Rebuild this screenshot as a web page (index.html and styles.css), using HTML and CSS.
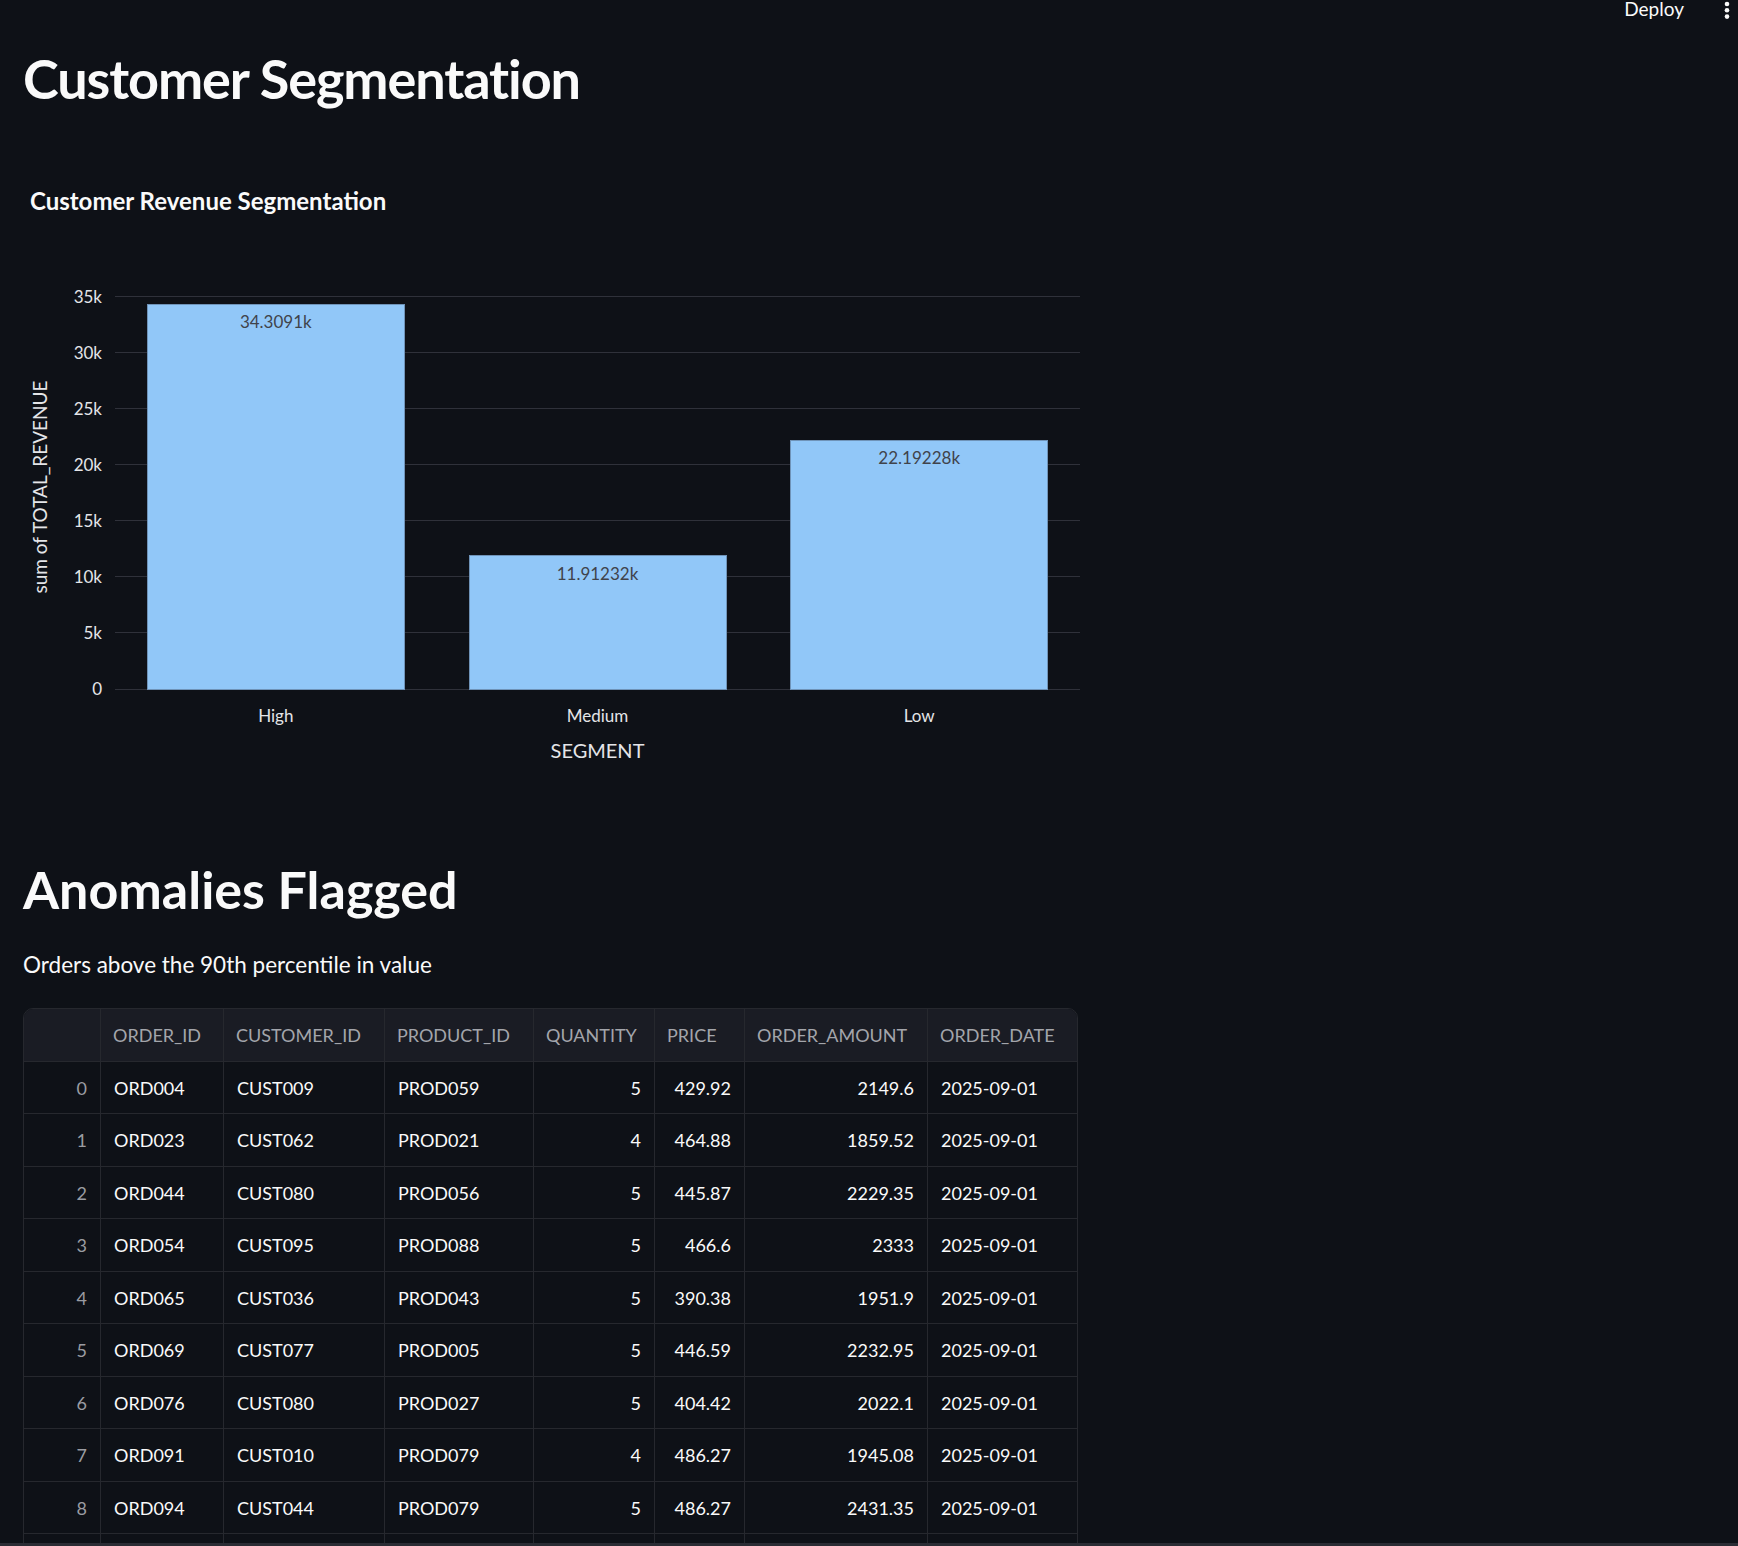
FILE: index.html
```html
<!DOCTYPE html>
<html lang="en">
<head>
<meta charset="utf-8">
<title>Customer Segmentation</title>
<link rel="stylesheet" href="styles.css">
</head>
<body>
<header class="toolbar">
  <span class="deploy">Deploy</span>
  <svg class="menu" width="6" height="20" viewBox="0 0 6 20" aria-hidden="true">
    <circle cx="3" cy="4" r="2.3"/>
    <circle cx="3" cy="10.3" r="2.3"/>
    <circle cx="3" cy="16.6" r="2.3"/>
  </svg>
</header>
<main class="main">
  <h1 class="title">Customer Segmentation</h1>
  <div class="chart-title">Customer Revenue Segmentation</div>
  <svg class="chart" width="1080" height="520" viewBox="0 0 1080 520">
    <g class="grid-lines">
      <line x1="92" x2="1057" y1="36.5" y2="36.5"/>
      <line x1="92" x2="1057" y1="92.5" y2="92.5"/>
      <line x1="92" x2="1057" y1="148.5" y2="148.5"/>
      <line x1="92" x2="1057" y1="204.5" y2="204.5"/>
      <line x1="92" x2="1057" y1="260.5" y2="260.5"/>
      <line x1="92" x2="1057" y1="316.5" y2="316.5"/>
      <line x1="92" x2="1057" y1="372.5" y2="372.5"/>
      <line x1="92" x2="1057" y1="429.5" y2="429.5"/>
    </g>
    <g class="y-labels">
      <text x="79" y="42.6">35k</text>
      <text x="79" y="98.7">30k</text>
      <text x="79" y="154.8">25k</text>
      <text x="79" y="210.9">20k</text>
      <text x="79" y="267">15k</text>
      <text x="79" y="323.1">10k</text>
      <text x="79" y="379.2">5k</text>
      <text x="79" y="435.4">0</text>
    </g>
    <g class="bars">
      <rect x="124.5" y="44" width="257" height="385.5"/>
      <rect x="446" y="295.5" width="257" height="134"/>
      <rect x="767.5" y="180" width="257" height="249.5"/>
    </g>
    <g class="bar-values">
      <text x="252.8" y="68.3">34.3091k</text>
      <text x="574.5" y="319.7">11.91232k</text>
      <text x="896.2" y="204.3">22.19228k</text>
    </g>
    <g class="x-labels">
      <text x="252.8" y="461.5">High</text>
      <text x="574.5" y="461.5">Medium</text>
      <text x="896.2" y="461.5">Low</text>
    </g>
    <text class="x-title" x="574.5" y="498">SEGMENT</text>
    <text class="y-title" transform="translate(23.5 227) rotate(-90)">sum of TOTAL_REVENUE</text>
  </svg>
  <h2 class="section">Anomalies Flagged</h2>
  <p class="caption">Orders above the 90th percentile in value</p>
  <div class="table-wrap">
    <table class="data">
      <colgroup>
        <col class="c-idx"><col class="c-order"><col class="c-cust"><col class="c-prod"><col class="c-qty"><col class="c-price"><col class="c-amt"><col class="c-date">
      </colgroup>
      <thead>
        <tr><th></th><th>ORDER_ID</th><th>CUSTOMER_ID</th><th>PRODUCT_ID</th><th>QUANTITY</th><th>PRICE</th><th>ORDER_AMOUNT</th><th>ORDER_DATE</th></tr>
      </thead>
      <tbody>
        <tr><td class="idx">0</td><td>ORD004</td><td>CUST009</td><td>PROD059</td><td class="num">5</td><td class="num">429.92</td><td class="num">2149.6</td><td>2025-09-01</td></tr>
        <tr><td class="idx">1</td><td>ORD023</td><td>CUST062</td><td>PROD021</td><td class="num">4</td><td class="num">464.88</td><td class="num">1859.52</td><td>2025-09-01</td></tr>
        <tr><td class="idx">2</td><td>ORD044</td><td>CUST080</td><td>PROD056</td><td class="num">5</td><td class="num">445.87</td><td class="num">2229.35</td><td>2025-09-01</td></tr>
        <tr><td class="idx">3</td><td>ORD054</td><td>CUST095</td><td>PROD088</td><td class="num">5</td><td class="num">466.6</td><td class="num">2333</td><td>2025-09-01</td></tr>
        <tr><td class="idx">4</td><td>ORD065</td><td>CUST036</td><td>PROD043</td><td class="num">5</td><td class="num">390.38</td><td class="num">1951.9</td><td>2025-09-01</td></tr>
        <tr><td class="idx">5</td><td>ORD069</td><td>CUST077</td><td>PROD005</td><td class="num">5</td><td class="num">446.59</td><td class="num">2232.95</td><td>2025-09-01</td></tr>
        <tr><td class="idx">6</td><td>ORD076</td><td>CUST080</td><td>PROD027</td><td class="num">5</td><td class="num">404.42</td><td class="num">2022.1</td><td>2025-09-01</td></tr>
        <tr><td class="idx">7</td><td>ORD091</td><td>CUST010</td><td>PROD079</td><td class="num">4</td><td class="num">486.27</td><td class="num">1945.08</td><td>2025-09-01</td></tr>
        <tr><td class="idx">8</td><td>ORD094</td><td>CUST044</td><td>PROD079</td><td class="num">5</td><td class="num">486.27</td><td class="num">2431.35</td><td>2025-09-01</td></tr>
        <tr><td class="idx"></td><td></td><td></td><td></td><td class="num"></td><td class="num"></td><td class="num"></td><td></td></tr>
      </tbody>
    </table>
  </div>
</main>
<div class="hscroll"></div>
</body>
</html>
```
FILE: styles.css
```css
html, body {
  margin: 0;
  padding: 0;
}
body {
  background: #0e1117;
  color: #fafafa;
  font-family: Lato, "Noto Sans", sans-serif;
  height: 1546px;
  overflow: hidden;
}
.toolbar {
  display: flex;
  justify-content: flex-end;
  align-items: flex-start;
  gap: 40px;
  height: 20px;
  padding-right: 8px;
}
.deploy {
  font-size: 19px;
  line-height: 18px;
  color: #fafafa;
}
.menu {
  display: block;
  fill: #fafafa;
}
.main {
  padding-left: 23px;
  width: 1056px;
}
.title {
  margin: 23.5px 0 0;
  font-size: 54px;
  line-height: 70px;
  font-weight: 700;
  letter-spacing: -1.1px;
}
.chart-title {
  margin-top: 71.7px;
  padding-left: 7px;
  font-size: 24px;
  line-height: 32px;
  font-weight: 700;
}
.chart {
  display: block;
  margin-top: 42.8px;
  font-family: Lato, "Noto Sans", sans-serif;
}
.grid-lines line {
  stroke: #2f313a;
  stroke-width: 1;
  shape-rendering: crispEdges;
}
.y-labels text {
  fill: #e4e5e8;
  font-size: 17px;
  text-anchor: end;
}
.bars rect {
  fill: #91c7f8;
  stroke: #6f93b8;
  stroke-width: 1;
  shape-rendering: crispEdges;
}
.bar-values text {
  fill: #40434b;
  font-size: 17px;
  text-anchor: middle;
}
.x-labels text {
  fill: #e4e5e8;
  font-size: 17px;
  text-anchor: middle;
}
.x-title {
  fill: #e4e5e8;
  font-size: 20px;
  text-anchor: middle;
}
.y-title {
  fill: #e4e5e8;
  font-size: 19px;
  text-anchor: middle;
}
.section {
  margin: 77.4px 0 0;
  font-size: 52px;
  line-height: 64px;
  font-weight: 700;
}
.caption {
  margin: 26.2px 0 0;
  font-size: 22.5px;
  line-height: 34px;
}
.table-wrap {
  margin-top: 26.4px;
  width: 1055px;
  box-sizing: border-box;
  border: 1px solid #26282e;
  border-radius: 10px;
  overflow: hidden;
}
.data {
  width: 100%;
  border-collapse: separate;
  border-spacing: 0;
  table-layout: fixed;
  font-size: 18px;
}
.c-idx { width: 77px; }
.c-order { width: 123px; }
.c-cust { width: 161px; }
.c-prod { width: 149px; }
.c-qty { width: 121px; }
.c-price { width: 90px; }
.c-amt { width: 183px; }
.data th {
  height: 53px;
  box-sizing: border-box;
  padding: 0 12px;
  background: #1a1c24;
  color: #a3a5ab;
  font-weight: 400;
  text-align: left;
  white-space: nowrap;
  border-bottom: 1px solid #26282e;
  border-right: 1px solid #26282e;
}
.data td {
  height: 52.5px;
  box-sizing: border-box;
  padding: 0 13px;
  color: #fafafa;
  white-space: nowrap;
  border-bottom: 1px solid #26282e;
  border-right: 1px solid #26282e;
}
.data th:last-child,
.data td:last-child {
  border-right: none;
}
.data td.num {
  text-align: right;
}
.data td.idx {
  text-align: right;
  color: #9a9ca2;
}
.hscroll {
  position: fixed;
  left: 0;
  right: 0;
  bottom: 0;
  height: 3px;
  background: #2a2c34;
}
```
